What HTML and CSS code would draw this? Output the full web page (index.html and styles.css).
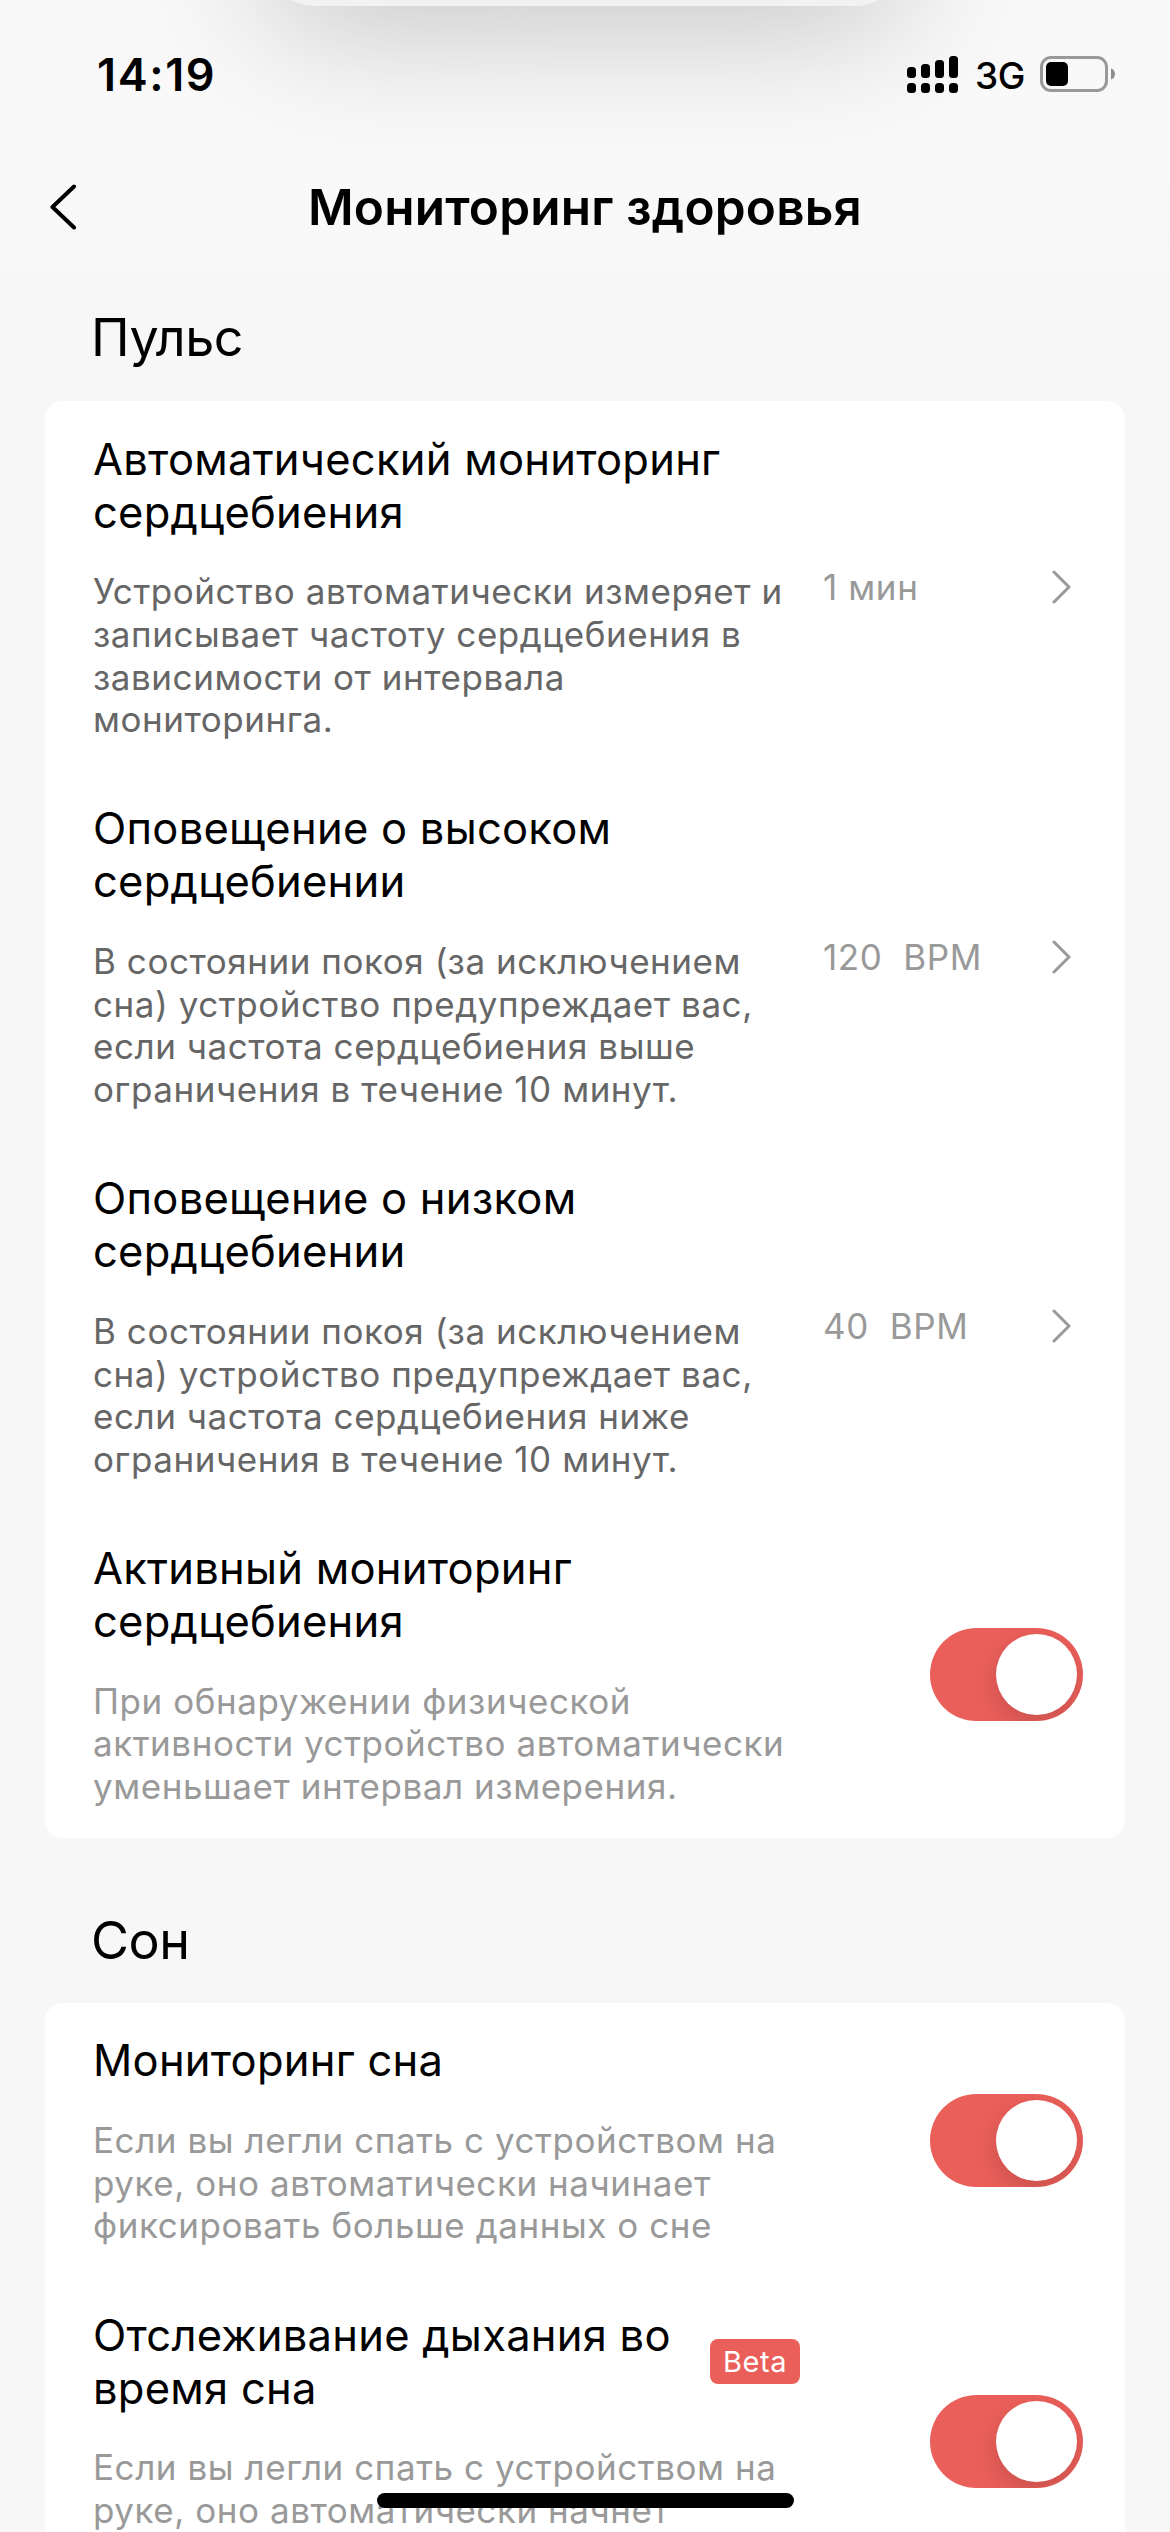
FILE: index.html
```html
<!DOCTYPE html>
<html lang="ru">
<head>
<meta charset="utf-8">
<title>Мониторинг здоровья</title>
<link rel="stylesheet" href="styles.css">
</head>
<body>
<div class="screen">
  <header class="header">
    <div class="top-sheet"></div>
    <div class="status-bar">
      <span class="time">14:19</span>
      <div class="status-icons">
        <svg class="signal" width="51" height="37" viewBox="0 0 51 37"><rect x="0" y="11" width="9" height="11" rx="3.5"/><rect x="14" y="8" width="9" height="14" rx="3.5"/><rect x="28" y="4" width="9" height="18" rx="3.5"/><rect x="42" y="0" width="9" height="22" rx="3.5"/><rect x="0" y="27" width="9" height="10" rx="3.5"/><rect x="14" y="27" width="9" height="10" rx="3.5"/><rect x="28" y="27" width="9" height="10" rx="3.5"/><rect x="42" y="27" width="9" height="10" rx="3.5"/></svg>
        <span class="network">3G</span>
        <svg class="battery" width="75" height="36" viewBox="0 0 75 36"><rect x="1.5" y="1.5" width="65" height="33" rx="9.5" fill="none" stroke="#999" stroke-width="3"/><rect x="6" y="6" width="22" height="24" rx="5"/><path d="M71 12.500C76.300 14 76.300 22 71 23.500Z" fill="#8c8c8c"/></svg>
      </div>
    </div>
    <div class="nav">
      <svg class="back" width="28" height="46" viewBox="0 0 28 46"><path d="M25 2.500L3.500 23L25 43.500"/></svg>
      <h1 class="page-title">Мониторинг здоровья</h1>
    </div>
  </header>

  <main>
    <h2 class="section-title">Пульс</h2>
    <section class="card">
      <div class="row">
        <div class="copy">
          <h3 class="name">Автоматический мониторинг<br>сердцебиения</h3>
          <p class="desc">Устройство автоматически измеряет и<br>записывает частоту сердцебиения в<br>зависимости от интервала<br>мониторинга.</p>
        </div>
        <span class="value">1 мин</span>
        <svg class="chevron" width="20" height="36" viewBox="0 0 20 36"><path d="M3 3L18 18L3 33"/></svg>
      </div>
      <div class="row">
        <div class="copy">
          <h3 class="name">Оповещение о высоком<br>сердцебиении</h3>
          <p class="desc">В состоянии покоя (за исключением<br>сна) устройство предупреждает вас,<br>если частота сердцебиения выше<br>ограничения в течение 10 минут.</p>
        </div>
        <span class="value">120&nbsp; BPM</span>
        <svg class="chevron" width="20" height="36" viewBox="0 0 20 36"><path d="M3 3L18 18L3 33"/></svg>
      </div>
      <div class="row">
        <div class="copy">
          <h3 class="name">Оповещение о низком<br>сердцебиении</h3>
          <p class="desc">В состоянии покоя (за исключением<br>сна) устройство предупреждает вас,<br>если частота сердцебиения ниже<br>ограничения в течение 10 минут.</p>
        </div>
        <span class="value">40&nbsp; BPM</span>
        <svg class="chevron" width="20" height="36" viewBox="0 0 20 36"><path d="M3 3L18 18L3 33"/></svg>
      </div>
      <div class="row">
        <div class="copy">
          <h3 class="name">Активный мониторинг<br>сердцебиения</h3>
          <p class="desc light">При обнаружении физической<br>активности устройство автоматически<br>уменьшает интервал измерения.</p>
        </div>
        <span class="toggle"><span class="knob"></span></span>
      </div>
    </section>

    <h2 class="section-title">Сон</h2>
    <section class="card">
      <div class="row">
        <div class="copy">
          <h3 class="name">Мониторинг сна</h3>
          <p class="desc light">Если вы легли спать с устройством на<br>руке, оно автоматически начинает<br>фиксировать больше данных о сне</p>
        </div>
        <span class="toggle"><span class="knob"></span></span>
      </div>
      <div class="row row-breathing">
        <div class="copy">
          <div class="name-line">
            <h3 class="name">Отслеживание дыхания во<br>время сна</h3>
            <span class="badge">Beta</span>
          </div>
          <p class="desc light">Если вы легли спать с устройством на<br>руке, оно автоматически начнет</p>
        </div>
        <span class="toggle"><span class="knob"></span></span>
      </div>
    </section>
  </main>
  <div class="home-indicator"></div>
</div>
</body>
</html>
```
FILE: styles.css
```css
* { box-sizing: border-box; }

body {
  margin: 0;
  background: #f7f7f7;
  color: #000;
  font-family: Inter, "Liberation Sans", sans-serif;
  font-optical-sizing: none;
}

h1, h2, h3, p { margin: 0; font-weight: 400; }
svg { display: block; flex: none; }

.screen {
  position: relative;
  width: 1170px;
  height: 2532px;
  overflow: hidden;
}

.header {
  position: relative;
  height: 275px;
  overflow: hidden;
  background: linear-gradient(#f9f9f9 60%, #f8f8f8);
}

.top-sheet {
  position: absolute;
  left: 266px;
  top: -134px;
  width: 638px;
  height: 140px;
  border-radius: 48px;
  background: #f2f2f2;
  box-shadow: 0 16px 140px rgba(0, 0, 0, .23);
}

.status-bar {
  position: relative;
  display: flex;
  justify-content: space-between;
  height: 150px;
  padding: 48px 55px 0 97px;
}

.time {
  font-size: 45px;
  font-weight: 600;
  line-height: 53px;
  letter-spacing: 1.6px;
}

.status-icons { display: flex; align-items: center; height: 52px; }
.network {
  width: 65px;
  margin: 2px 0 0 17px;
  font-size: 37px;
  font-weight: 500;
  letter-spacing: -.5px;
}

.nav {
  position: relative;
  display: flex;
  align-items: center;
  justify-content: center;
  height: 114px;
}

.back {
  position: absolute;
  left: 49px;
  top: 34px;
  fill: none;
  stroke: #000;
  stroke-width: 4;
  stroke-linecap: round;
  stroke-linejoin: round;
}

.page-title {
  font-size: 49.5px;
  font-weight: 600;
  letter-spacing: .2px;
  white-space: nowrap;
}

.section-title {
  height: 126px;
  padding: 31px 0 0 91px;
  font-size: 52px;
  line-height: 64px;
  letter-spacing: -.5px;
}
.card + .section-title { height: 165px; padding-top: 71px; }

.card {
  margin: 0 45px;
  border-radius: 18px;
  background: #fff;
}

.row {
  display: flex;
  align-items: center;
  padding: 31.5px 42px 30px 48px;
}
.row-breathing { height: 327px; }
.row-breathing .copy { height: 265px; }

.copy { flex: none; width: 730px; }
.name {
  font-size: 43.5px;
  line-height: 53px;
  letter-spacing: .25px;
  white-space: nowrap;
}
.name-line { display: flex; align-items: center; }
.name-line .name { width: 617px; }
.desc {
  margin-top: 31.7px;
  color: #666;
  font-size: 35px;
  line-height: 42.67px;
  letter-spacing: .55px;
  white-space: nowrap;
}
.desc.light { color: #999; }

.value {
  flex: 1;
  color: #999;
  font-size: 35px;
  letter-spacing: .6px;
  white-space: nowrap;
}

.chevron {
  margin-right: 12px;
  fill: none;
  stroke: #999;
  stroke-width: 3;
  stroke-linecap: round;
  stroke-linejoin: round;
}

.badge {
  width: 90px;
  height: 45px;
  border-radius: 8px;
  background: #eb5f5a;
  color: #fff;
  font-size: 29px;
  line-height: 45px;
  letter-spacing: .6px;
  text-align: center;
}

.toggle {
  flex: none;
  width: 153px;
  height: 93px;
  margin-left: auto;
  padding: 6px;
  border-radius: 47px;
  overflow: hidden;
  background: #eb5f5a;
}
.knob {
  display: block;
  width: 81px;
  height: 81px;
  margin-left: auto;
  border-radius: 50%;
  background: #fff;
  box-shadow: 0 9px 24px rgba(0, 0, 0, .15);
}

.home-indicator {
  position: absolute;
  left: 377px;
  top: 2493px;
  width: 417px;
  height: 15px;
  border-radius: 8px;
  background: #000;
}
```
